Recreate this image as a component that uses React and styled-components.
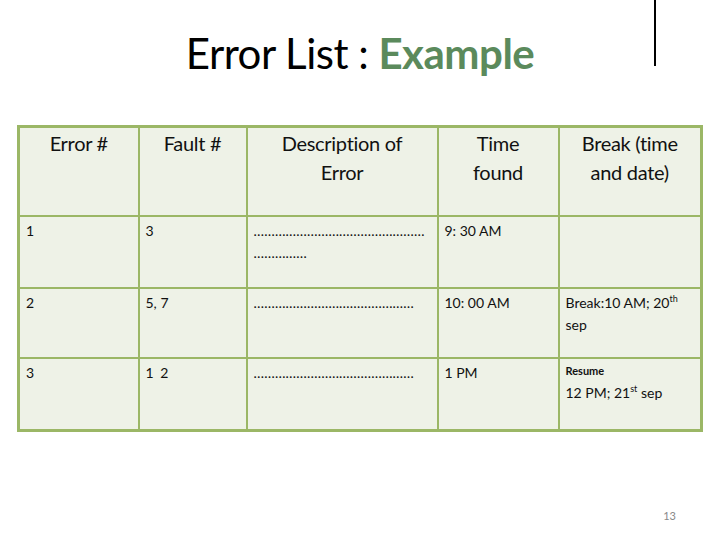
import React from "react";
import styled, { createGlobalStyle } from "styled-components";

const GlobalStyle = createGlobalStyle`
  html, body {
    margin: 0;
    padding: 0;
    background: #ffffff;
  }
  body {
    font-family: Lato, "Open Sans", sans-serif;
  }
  sup {
    font-size: 9px;
    line-height: 0;
    vertical-align: 6px;
  }
`;

const Slide = styled.div`
  width: 720px;
  height: 540px;
  display: flex;
  flex-direction: column;
  box-sizing: border-box;
  padding: 0 17px 0 17px;
`;

const Header = styled.div`
  display: grid;
  grid-template-columns: 1fr auto 1fr;
  height: 125px;
`;

const Title = styled.h1`
  grid-column: 2;
  margin: 0;
  padding-top: 28px;
  font-size: 42px;
  font-weight: 400;
  color: #000;
  letter-spacing: -0.5px;
  white-space: nowrap;
`;

const Accent = styled.span`
  color: #5b8a5c;
  font-weight: 700;
`;

const Rule = styled.div`
  grid-column: 3;
  justify-self: start;
  margin-left: 120px;
  width: 2px;
  height: 66px;
  background: #000;
`;

const Table = styled.table`
  border-collapse: collapse;
  table-layout: fixed;
  width: 685px;
  background: #eef2e7;
  border: 3px solid #9bb766;
`;

const HeadCell = styled.th`
  border: 2px solid #9bb766;
  height: 86px;
  vertical-align: top;
  padding: 1px 14px 0;
  font-size: 20px;
  font-weight: 400;
  line-height: 29px;
  text-align: center;
  color: #111;
  letter-spacing: -0.3px;
`;

const Cell = styled.td`
  border: 2px solid #9bb766;
  height: ${(p) => p.$h}px;
  vertical-align: top;
  padding: 3px 6px 0;
  font-size: 14px;
  line-height: 22px;
  color: #111;
  letter-spacing: ${(p) => (p.$spaced ? "1.5px" : "0")};
  box-sizing: border-box;
`;

const Dots = styled.span`
  display: block;
  font-size: 14px;
  line-height: 22px;
  letter-spacing: 0.2px;
  white-space: nowrap;
`;

const Small = styled.span`
  display: block;
  font-size: 11px;
  font-weight: 700;
  line-height: 18px;
  margin-bottom: 2px;
`;

const Footer = styled.div`
  flex: 1;
  display: flex;
  justify-content: flex-end;
  align-items: flex-end;
  padding: 0 27px 18px 0;
  font-size: 11px;
  color: #888;
`;

const cols = [120, 108, 191, 121, 143];

const repeat = (n) => "…".repeat(n);

export default function App() {
  return (
    <Slide>
      <GlobalStyle />
      <Header>
        <Title>
          Error List : <Accent>Example</Accent>
        </Title>
        <Rule />
      </Header>
      <Table>
        <colgroup>
          {cols.map((w, i) => (
            <col key={i} style={{ width: w }} />
          ))}
        </colgroup>
        <thead>
          <tr>
            <HeadCell>Error #</HeadCell>
            <HeadCell>Fault #</HeadCell>
            <HeadCell>Description of Error</HeadCell>
            <HeadCell>Time found</HeadCell>
            <HeadCell>Break (time and date)</HeadCell>
          </tr>
        </thead>
        <tbody>
          <tr>
            <Cell $h={72}>1</Cell>
            <Cell $h={72}>3</Cell>
            <Cell $h={72}>
              <Dots>{repeat(16)}</Dots>
              <Dots>{repeat(5)}</Dots>
            </Cell>
            <Cell $h={72}>9: 30 AM</Cell>
            <Cell $h={72}></Cell>
          </tr>
          <tr>
            <Cell $h={70}>2</Cell>
            <Cell $h={70}>5, 7</Cell>
            <Cell $h={70}>
              <Dots>{repeat(15)}</Dots>
            </Cell>
            <Cell $h={70}>10: 00 AM</Cell>
            <Cell $h={70}>
              Break:10 AM; 20<sup>th</sup> sep
            </Cell>
          </tr>
          <tr>
            <Cell $h={72}>3</Cell>
            <Cell $h={72} $spaced>1 2</Cell>
            <Cell $h={72}>
              <Dots>{repeat(15)}</Dots>
            </Cell>
            <Cell $h={72}>1 PM</Cell>
            <Cell $h={72}>
              <Small>Resume</Small>
              12 PM; 21<sup>st</sup> sep
            </Cell>
          </tr>
        </tbody>
      </Table>
      <Footer>13</Footer>
    </Slide>
  );
}
